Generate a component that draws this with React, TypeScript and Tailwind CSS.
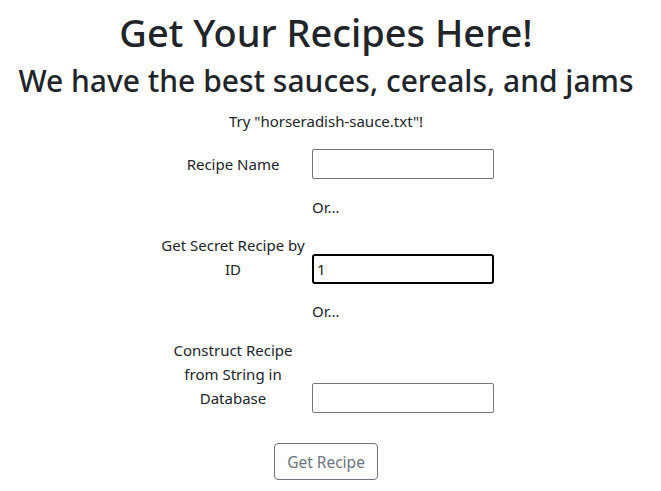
import React, { FC } from "react";

const Row: FC<{ label: string; value?: string; focused?: boolean }> = ({ label, value, focused }) => {
  return (
    <div className="flex items-end">
      <label className="w-[150px] text-center leading-6 mb-[3px]">{label}</label>
      <input
        type="text"
        defaultValue={value}
        className={
          focused
            ? "ml-[4px] w-[182px] h-[30px] px-[3px] border-2 border-black rounded-[3px] outline-none text-[15px]"
            : "ml-[4px] w-[182px] h-[30px] px-[3px] border border-[#767676] rounded-[2px] outline-none text-[15px]"
        }
      />
    </div>
  );
};

const App: FC = () => {
  return (
    <div className="min-h-screen bg-white text-[#212529] font-['Noto_Sans',sans-serif] pr-[9px]">
      {/* headings */}
      <div className="flex flex-col items-center">
        <h1 className="text-[38px] font-medium leading-[48px] pt-[8px]">Get Your Recipes Here!</h1>
        <h2 className="text-[30px] font-medium leading-[40px] mt-[5px]">
          We have the best sauces, cereals, and jams
        </h2>
        <p className="text-[15px] leading-6 mt-[8px]">Try "horseradish-sauce.txt"!</p>
      </div>

      {/* form */}
      <div className="mx-auto w-[336px] mt-[16px] text-[15px]">
        <Row label="Recipe Name" />
        <div className="pl-[154px] mt-[16px] leading-6">Or...</div>
        <div className="mt-[14px]">
          <Row label="Get Secret Recipe by ID" value="1" focused />
        </div>
        <div className="pl-[154px] mt-[15px] leading-6">Or...</div>
        <div className="mt-[15px]">
          <Row label="Construct Recipe from String in Database" />
        </div>
        <div className="flex justify-center mt-[30px]">
          <button className="h-[37px] px-[12px] border border-[#6c757d] rounded-[4px] text-[#6c757d] text-[15.5px] leading-6">
            Get Recipe
          </button>
        </div>
      </div>
    </div>
  );
};

export default App;
